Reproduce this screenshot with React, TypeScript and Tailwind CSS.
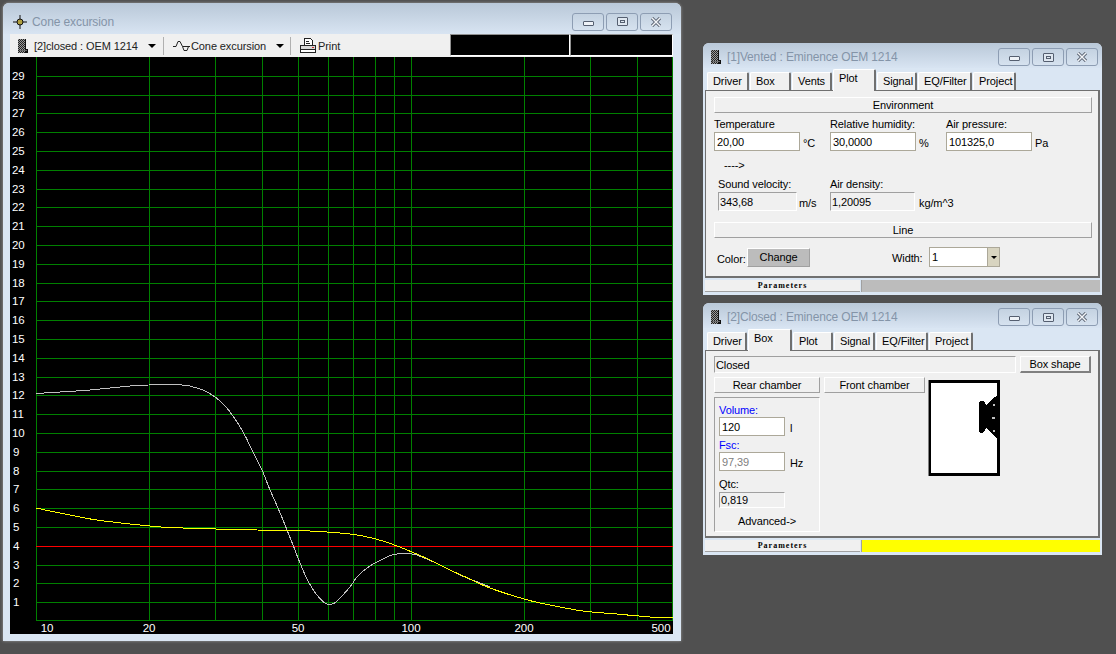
import * as React from "react";

const gridX = [149, 215, 262, 298, 328, 353, 375, 394, 411, 524, 590, 637];
const rowY = [
  602, 583, 565, 546, 527, 508, 489, 471, 452, 433, 414, 395, 377, 358, 339, 320, 301, 283, 264, 245, 226, 207, 189, 170,
  151, 132, 113, 95, 76,
];

const whiteCurve: [number, number][] = [
  [36, 393.5], [60, 392], [90, 390], [130, 386], [149, 385], [182, 385], [193, 387], [205, 391], [215, 397], [223, 404],
  [230, 412], [242, 430], [253, 452], [262, 470], [270, 490], [278, 508], [283, 520], [287, 530], [293, 545], [300, 563],
  [308, 581], [317, 595], [325, 603], [332, 604], [338, 600], [350, 587], [357, 577], [367, 568], [377, 562], [387, 557],
  [397, 554], [412, 554], [422, 557], [440, 565], [460, 575], [480, 583], [490, 587],
];

const yellowCurve: [number, number][] = [
  [36, 508], [60, 513], [97, 520], [150, 526], [183, 528], [257, 530], [310, 531], [350, 534], [367, 537], [383, 541],
  [397, 546], [412, 552], [430, 560], [450, 570], [470, 579], [490, 588], [524, 599], [550, 605], [583, 611], [617, 614],
  [650, 617], [673, 618],
];

// catmull-rom through the read-off points, sampled to a polyline
function smooth(pts: [number, number][]) {
  const out: string[] = [];
  for (let i = 0; i < pts.length - 1; i++) {
    const p0 = pts[Math.max(i - 1, 0)];
    const p1 = pts[i];
    const p2 = pts[i + 1];
    const p3 = pts[Math.min(i + 2, pts.length - 1)];
    for (let s = 0; s < 6; s++) {
      const t = s / 6;
      const f = (a: number, b: number, c: number, d: number) =>
        0.5 * (2 * b + (c - a) * t + (2 * a - 5 * b + 4 * c - d) * t * t + (3 * b - a - 3 * c + d) * t * t * t);
      out.push(`${f(p0[0], p1[0], p2[0], p3[0]).toFixed(1)},${f(p0[1], p1[1], p2[1], p3[1]).toFixed(1)}`);
    }
  }
  const last = pts[pts.length - 1];
  out.push(`${last[0]},${last[1]}`);
  return out.join(" ");
}

function Chart() {
  return (
    <svg viewBox="10 57 663 577" className="block h-[577px] w-[663px] bg-black" style={{ fontFamily: "'Liberation Sans', sans-serif" }}>
      <g stroke="#008000" strokeWidth="1" shapeRendering="crispEdges">
        <line x1="36.5" y1="57" x2="36.5" y2="620" />
        <line x1="672.5" y1="57" x2="672.5" y2="620" />
        {gridX.map((x) => (
          <line key={x} x1={x + 0.5} y1="57" x2={x + 0.5} y2="620" />
        ))}
        {rowY.map((y) => (
          <line key={y} x1="36" y1={y + 0.5} x2="673" y2={y + 0.5} />
        ))}
        <line x1="36" y1="620.5" x2="673" y2="620.5" />
      </g>
      <line x1="36" y1="546.5" x2="673" y2="546.5" stroke="#ff0000" shapeRendering="crispEdges" />
      <polyline points={smooth(whiteCurve)} fill="none" stroke="#c0c0c0" strokeWidth="1" shapeRendering="crispEdges" />
      <polyline points={smooth(yellowCurve)} fill="none" stroke="#ffff00" strokeWidth="1" shapeRendering="crispEdges" />
      <g fill="#ffffff" fontSize="11.5">
        {rowY.map((y, i) => (
          <text key={y} x={i + 1 > 9 ? 12 : 13} y={y + 4}>
            {i + 1}
          </text>
        ))}
        <text x="47" y="632" textAnchor="middle">10</text>
        <text x="149" y="632" textAnchor="middle">20</text>
        <text x="298" y="632" textAnchor="middle">50</text>
        <text x="411" y="632" textAnchor="middle">100</text>
        <text x="524" y="632" textAnchor="middle">200</text>
        <text x="661" y="632" textAnchor="middle">500</text>
      </g>
    </svg>
  );
}

function DeviceIcon({ className }: { className?: string }) {
  return (
    <svg viewBox="0 0 10 14" className={className} shapeRendering="crispEdges">
      <defs>
        <pattern id="dots" width="2" height="2" patternUnits="userSpaceOnUse">
          <rect width="2" height="2" fill="#222222" />
          <rect width="1" height="1" fill="#9a9a9a" />
          <rect x="1" y="1" width="1" height="1" fill="#9a9a9a" />
        </pattern>
      </defs>
      <rect x="0" y="0" width="7" height="14" fill="url(#dots)" />
      <rect x="7" y="0" width="1" height="10" fill="#111111" />
      <rect x="7" y="10" width="3" height="4" fill="#111111" />
      <rect x="1" y="11" width="8" height="1" fill="#666666" />
    </svg>
  );
}

function WaveIcon({ className }: { className?: string }) {
  return (
    <svg viewBox="0 0 17 12" className={className} fill="none" stroke="#222222" strokeWidth="1">
      <path d="M0 6.5H3L5 1.5H7L9.5 6.5H17" />
      <path d="M9.5 6.5L11 10.5H14L15.5 6.5" />
    </svg>
  );
}

function PrintIcon({ className }: { className?: string }) {
  return (
    <svg viewBox="0 0 16 15" className={className} shapeRendering="crispEdges">
      <path d="M4.5 0.5H10.5L12.5 2.5V7.5H4.5Z" fill="#ffffff" stroke="#222222" />
      <path d="M6 3H9M6 5H10" stroke="#222222" />
      <rect x="0.5" y="7.5" width="15" height="4" fill="#d8d8d8" stroke="#222222" />
      <rect x="0.5" y="11.5" width="15" height="3" fill="#ffffff" stroke="#222222" />
      <rect x="12" y="9" width="2" height="1" fill="#d03030" />
    </svg>
  );
}

function SpeakerBox() {
  return (
    <svg viewBox="0 0 72 96" className="mt-[3px] block h-[96px] w-[72px]" shapeRendering="crispEdges">
      <rect x="0" y="0" width="72" height="96" fill="#000000" />
      <rect x="0" y="0" width="1" height="96" fill="#808080" />
      <rect x="3" y="3" width="66" height="90" fill="#ffffff" />
      <path d="M51 23C51 21 55 20 57 22L58 26L64 19L69 16V59L64 54L58 47L57 51C55 54 51 53 51 51Z" fill="#000000" />
      <rect x="65" y="24" width="2" height="2" fill="#c0c0c0" />
      <rect x="64" y="37" width="3" height="2" fill="#c0c0c0" />
      <rect x="65" y="50" width="2" height="2" fill="#c0c0c0" />
    </svg>
  );
}

function WinButton({ kind }: { kind: "min" | "max" | "close" }) {
  return (
    <div className="flex h-[18px] w-[32px] items-center justify-center rounded-[3px] border border-[#8d9db3] bg-gradient-to-b from-[#c4d2e1] to-[#d6e2ef]">
      {kind === "min" && <div className="mt-[3px] h-[5px] w-[11px] rounded-[1px] border border-[#555f70] bg-[#eef2f7]" />}
      {kind === "max" && (
        <div className="flex h-[9px] w-[11px] items-center justify-center rounded-[1px] border border-[#555f70] bg-[#dfe7f0]">
          <div className="h-[3px] w-[5px] border border-[#555f70]" />
        </div>
      )}
      {kind === "close" && (
        <svg viewBox="0 0 12 10" className="h-[10px] w-[12px]">
          <path d="M2 1L10 9M10 1L2 9" stroke="#5d6675" strokeWidth="3.2" />
          <path d="M2 1L10 9M10 1L2 9" stroke="#f4f6f9" strokeWidth="1.4" />
        </svg>
      )}
    </div>
  );
}

function WinButtons() {
  return (
    <div className="flex gap-[2px]">
      <WinButton kind="min" />
      <WinButton kind="max" />
      <WinButton kind="close" />
    </div>
  );
}

function Tabs({ tabs }: { tabs: { name: string; w: number; on?: boolean }[] }) {
  return (
    <div className="flex h-[22px] items-end pl-[2px]">
      {tabs.map((t) => (
        <div
          key={t.name}
          className={`mr-px flex items-center rounded-t-[2px] border-l border-t border-white border-r-2 border-r-[#707070] bg-[#f0f0f0] pl-[5px] ${
            t.on ? "z-10 -mb-px h-[22px] pb-[6px]" : "h-[18px] pb-[2px]"
          }`}
          style={{ width: t.w }}
        >
          {t.name}
        </div>
      ))}
    </div>
  );
}

function Header({ children, className }: { children: React.ReactNode; className?: string }) {
  return (
    <div
      className={`flex h-[16px] items-center justify-center border-b border-l border-r border-t border-b-[#a0a0a0] border-l-white border-r-[#a0a0a0] border-t-white bg-[#f0f0f0] ${className ?? ""}`}
    >
      {children}
    </div>
  );
}

function Input({ value, className, dim }: { value: string; className?: string; dim?: boolean }) {
  return (
    <div className={`flex h-[19px] items-center border border-[#aca899] bg-white pl-[2px] ${dim ? "text-[#808080]" : ""} ${className ?? ""}`}>
      {value}
    </div>
  );
}

function ReadOnly({ value, className }: { value: string; className?: string }) {
  return (
    <div className={`flex items-center border border-b-white border-l-[#a0a0a0] border-r-white border-t-[#a0a0a0] pl-px ${className ?? ""}`}>
      {value}
    </div>
  );
}

function Status({ fill }: { fill: string }) {
  return (
    <div className="mt-[2px] flex h-[12px]">
      <div
        className="flex w-[155px] items-center justify-center border-b border-b-[#a0a0a0] bg-[#f0f0f0] text-[8px] font-bold tracking-[1px] text-black"
        style={{ fontFamily: "'Liberation Serif', serif" }}
      >
        Parameters
      </div>
      <div className="ml-px flex-1 border-l border-l-[#a0a0a0]" style={{ backgroundColor: fill }} />
    </div>
  );
}

function SmallWindow({
  title,
  top,
  tabs,
  fill,
  children,
}: {
  title: string;
  top: number;
  tabs: { name: string; w: number; on?: boolean }[];
  fill: string;
  children: React.ReactNode;
}) {
  return (
    <div
      className="absolute left-[703px] flex h-[252px] w-[399px] flex-col rounded-t-[6px] bg-[#dae6f3] px-[2px] pb-[3px] text-[11px] leading-[16px] tracking-[-0.1px] text-black"
      style={{ top }}
    >
      <div className="-mx-[2px] flex h-[25px] items-center rounded-t-[6px] bg-gradient-to-b from-[#b9c8d8] to-[#d8e4f2] pl-[8px] pr-[4px] pt-[3px]">
        <DeviceIcon className="h-[14px] w-[10px]" />
        <span className="ml-[6px] flex-1 text-[12px] tracking-[-0.15px] text-[#8494a8]">{title}</span>
        <WinButtons />
      </div>
      <Tabs tabs={tabs} />
      <div className="flex-1 border border-[#707070] border-b-2 border-r-2 bg-[#f0f0f0] pl-[8px] pr-[6px]">{children}</div>
      <Status fill={fill} />
    </div>
  );
}

export default function App() {
  return (
    <div className="relative h-[654px] w-[1116px] overflow-hidden bg-[#505050]" style={{ fontFamily: "'Liberation Sans', sans-serif" }}>
      <div className="absolute left-[3px] top-[3px] flex h-[638px] w-[678px] flex-col rounded-t-[6px] bg-[#dae6f3] pl-[7px] pr-[8px] text-[11px] leading-[16px] tracking-[-0.1px] text-[#222222] shadow-[0_0_3px_#a0a0a0]">
        <div className="-ml-[7px] -mr-[8px] flex h-[31px] items-center rounded-t-[6px] bg-gradient-to-b from-[#b9c8d8] to-[#d8e4f2] pl-[10px] pr-[9px] pt-[6px]">
          <svg viewBox="0 0 14 14" className="h-[14px] w-[14px]" fill="none">
            <path d="M7 0V14M0 7H14" stroke="#111111" />
            <circle cx="7" cy="7" r="3" stroke="#111111" fill="#b0a040" />
          </svg>
          <span className="ml-[5px] flex-1 text-[12px] text-[#8494a8]">Cone excursion</span>
          <WinButtons />
        </div>
        <div className="flex h-[23px] items-center bg-[#f0f0f0] pl-[8px]">
          <DeviceIcon className="h-[14px] w-[10px]" />
          <span className="ml-[6px] w-[114px] whitespace-nowrap">[2]closed : OEM 1214</span>
          <span className="h-0 w-0 border-x-[4px] border-t-[4px] border-x-transparent border-t-black" />
          <span className="ml-[7px] h-[18px] w-px bg-[#b0b0b0]" />
          <WaveIcon className="ml-[9px] h-[12px] w-[17px]" />
          <span className="ml-px w-[85px] whitespace-nowrap">Cone excursion</span>
          <span className="h-0 w-0 border-x-[4px] border-t-[4px] border-x-transparent border-t-black" />
          <span className="ml-[6px] h-[18px] w-px bg-[#b0b0b0]" />
          <PrintIcon className="ml-[9px] h-[15px] w-[16px]" />
          <span className="ml-[2px] flex-1">Print</span>
          <div className="flex h-[22px] self-start">
            <div className="w-[120px] border border-b-white border-l-[#909090] border-r-white border-t-[#909090] bg-black" />
            <div className="w-[103px] border border-b-white border-l-[#909090] border-r-white border-t-[#909090] bg-black" />
          </div>
        </div>
        <Chart />
      </div>

      <SmallWindow
        title="[1]Vented : Eminence OEM 1214"
        top={43}
        fill="#bcbcbc"
        tabs={[
          { name: "Driver", w: 42 },
          { name: "Box", w: 41 },
          { name: "Vents", w: 40 },
          { name: "Plot", w: 43, on: true },
          { name: "Signal", w: 40 },
          { name: "EQ/Filter", w: 54 },
          { name: "Project", w: 43 },
        ]}
      >
        <Header className="mt-[6px] w-[378px]">Environment</Header>
        <div className="mt-[3px] flex">
          <div className="w-[116px]">
            <div className="h-[16px]">Temperature</div>
            <div className="flex items-end">
              <Input value="20,00" className="w-[86px]" />
              <span className="ml-[3px]">°C</span>
            </div>
          </div>
          <div className="w-[116px]">
            <div className="h-[16px]">Relative humidity:</div>
            <div className="flex items-end">
              <Input value="30,0000" className="w-[86px]" />
              <span className="ml-[3px]">%</span>
            </div>
          </div>
          <div>
            <div className="h-[16px]">Air pressure:</div>
            <div className="flex items-end">
              <Input value="101325,0" className="w-[86px]" />
              <span className="ml-[3px]">Pa</span>
            </div>
          </div>
        </div>
        <div className="ml-[10px] mt-[6px] h-[15px]">----&gt;</div>
        <div className="ml-[4px] mt-[4px] flex">
          <div className="w-[112px]">
            <div className="h-[16px]">Sound velocity:</div>
            <div className="flex items-end">
              <ReadOnly value="343,68" className="h-[19px] w-[79px]" />
              <span className="ml-[2px]">m/s</span>
            </div>
          </div>
          <div>
            <div className="h-[16px]">Air density:</div>
            <div className="flex items-end">
              <ReadOnly value="1,20095" className="h-[19px] w-[85px]" />
              <span className="ml-[4px]">kg/m^3</span>
            </div>
          </div>
        </div>
        <Header className="mt-[11px] w-[378px]">Line</Header>
        <div className="mt-[9px] flex h-[20px] items-center">
          <span className="ml-[3px] mt-[4px] w-[30px]">Color:</span>
          <div className="flex h-[19px] w-[63px] items-center justify-center border border-b-[#a0a0a0] border-l-white border-r-[#a0a0a0] border-t-white bg-[#bcbcbc]">
            Change
          </div>
          <span className="ml-[82px] mt-[2px] w-[37px]">Width:</span>
          <div className="flex h-[20px] w-[71px] items-center justify-between border border-[#aca899] bg-white pl-[2px]">
            1
            <div className="flex h-full w-[12px] items-center justify-center border-l border-l-[#aca899] bg-[#d8d4c0]">
              <span className="h-0 w-0 border-x-[3px] border-t-[3px] border-x-transparent border-t-black" />
            </div>
          </div>
        </div>
      </SmallWindow>

      <SmallWindow
        title="[2]Closed : Eminence OEM 1214"
        top={303}
        fill="#ffff00"
        tabs={[
          { name: "Driver", w: 40 },
          { name: "Box", w: 44, on: true },
          { name: "Plot", w: 40 },
          { name: "Signal", w: 41 },
          { name: "EQ/Filter", w: 52 },
          { name: "Project", w: 44 },
        ]}
      >
        <div className="mt-[5px] flex">
          <ReadOnly value="Closed" className="h-[17px] w-[302px]" />
          <div className="ml-[4px] flex h-[17px] w-[71px] items-center justify-center border border-b-2 border-b-[#808080] border-l-white border-r-2 border-r-[#808080] border-t-white">
            Box shape
          </div>
        </div>
        <div className="mt-[4px] flex">
          <div className="w-[106px]">
            <Header>Rear chamber</Header>
            <div className="mt-[4px] h-[135px] border border-b-white border-l-[#a0a0a0] border-r-white border-t-[#a0a0a0] pl-[4px] pt-[4px]">
              <div className="h-[15px] text-[#0000ff]">Volume:</div>
              <div className="flex items-end">
                <Input value="120" className="w-[66px]" />
                <span className="ml-[5px]">l</span>
              </div>
              <div className="mt-px h-[15px] text-[#0000ff]">Fsc:</div>
              <div className="flex items-end">
                <Input value="97,39" dim className="w-[66px]" />
                <span className="ml-[5px]">Hz</span>
              </div>
              <div className="mt-[5px] h-[15px]">Qtc:</div>
              <ReadOnly value="0,819" className="mt-px h-[16px] w-[66px]" />
              <div className="ml-[19px] mt-[5px]">Advanced-&gt;</div>
            </div>
          </div>
          <Header className="ml-[4px] w-[101px]">Front chamber</Header>
          <div className="ml-[3px]">
            <SpeakerBox />
          </div>
        </div>
      </SmallWindow>
    </div>
  );
}
